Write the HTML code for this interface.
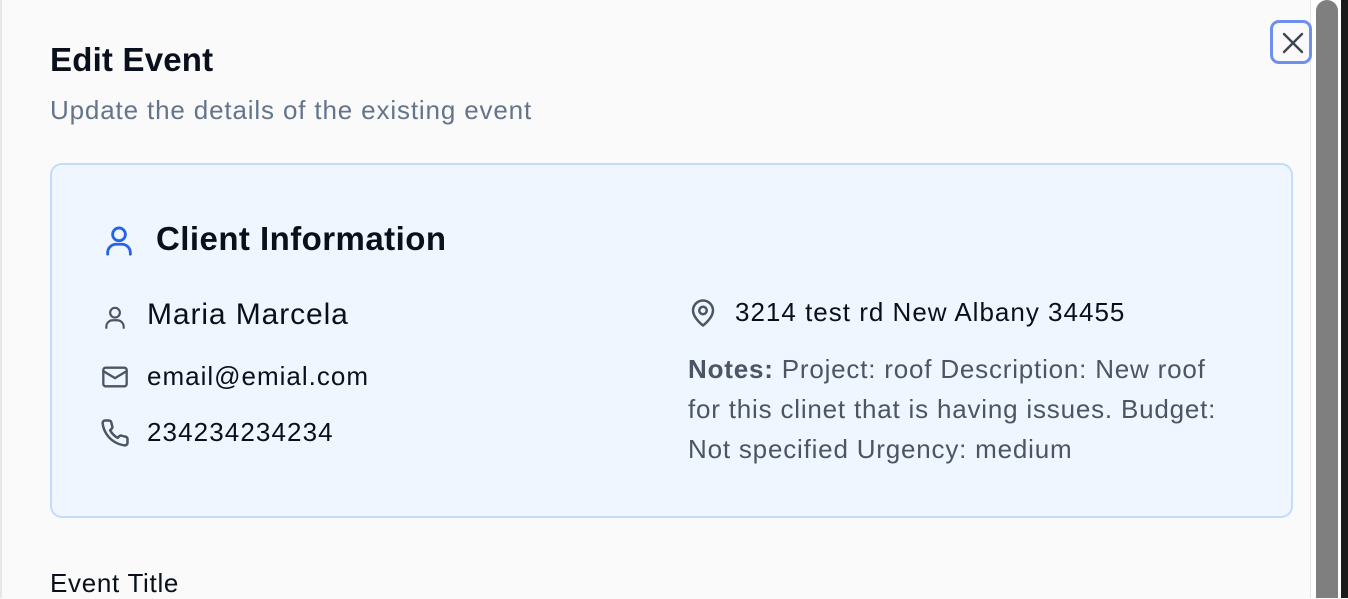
<!DOCTYPE html>
<html><head><meta charset="utf-8"><style>
*{margin:0;padding:0;box-sizing:border-box}
body{width:1348px;height:598px;overflow:hidden;background:#fafafa;font-family:"Liberation Sans",sans-serif;color:#0a0f1c;position:relative}
.a{position:absolute;white-space:nowrap}
.edge{position:absolute;left:0;top:0;width:2px;height:598px;background:#e5e7eb}
.sb{position:absolute;left:1310px;top:0;width:38px;height:598px;background:#fff;border-left:1px solid #e5e5e5}
.thumb{position:absolute;left:1316px;top:0;width:22px;height:598px;background:#7f7f7f;border-radius:11px 11px 0 0}
.dk{position:absolute;left:1341px;top:0;width:7px;height:598px;background:#1a1a1a}
.card{position:absolute;left:50px;top:163px;width:1243px;height:355px;background:#eff6ff;border:2px solid #c4dbfb;border-radius:12px}
.close{position:absolute;left:1270px;top:20px;width:42px;height:44px;border:3px solid #6d8ff0;border-radius:9px}
svg{position:absolute}
</style></head><body>
<div class="edge"></div>
<div class="a" style="left:50px;top:41px;font-size:33px;font-weight:bold;letter-spacing:0.2px">Edit Event</div>
<div class="a" style="left:50px;top:95px;font-size:26px;letter-spacing:0.85px;color:#64748b">Update the details of the existing event</div>
<div class="card"></div>
<svg style="left:102px;top:222px" width="34" height="36" viewBox="0 0 24 24" fill="none" stroke="#2563eb" stroke-width="2" stroke-linecap="round"><circle cx="12" cy="8" r="4.5"/><path d="M4 22v-1a6 6 0 0 1 6-6h4a6 6 0 0 1 6 6v1"/></svg>
<div class="a" style="left:156px;top:220px;font-size:33px;font-weight:bold;letter-spacing:0.45px">Client Information</div>
<svg style="left:102px;top:303px" width="26" height="28" viewBox="0 0 24 24" fill="none" stroke="#4b5563" stroke-width="2" stroke-linecap="round"><circle cx="12" cy="8" r="4.5"/><path d="M4 22v-1a6 6 0 0 1 6-6h4a6 6 0 0 1 6 6v1"/></svg>
<div class="a" style="left:147px;top:298px;font-size:30px;letter-spacing:0.9px">Maria Marcela</div>
<svg style="left:100px;top:363px" width="30" height="28" viewBox="0 0 24 24" fill="none" stroke="#4b5563" stroke-width="2" stroke-linecap="round" stroke-linejoin="round"><rect x="2" y="4" width="20" height="16" rx="2"/><path d="M22 7l-10 6L2 7"/></svg>
<div class="a" style="left:147px;top:361px;font-size:26px;letter-spacing:1px">email@emial.com</div>
<svg style="left:100px;top:418px" width="30" height="30" viewBox="0 0 24 24" fill="none" stroke="#4b5563" stroke-width="2" stroke-linecap="round" stroke-linejoin="round"><path d="M22 16.9v3a2 2 0 0 1-2.2 2 19.8 19.8 0 0 1-8.6-3.1 19.5 19.5 0 0 1-6-6A19.8 19.8 0 0 1 2.1 4.2 2 2 0 0 1 4.1 2h3a2 2 0 0 1 2 1.7c.1.9.4 1.9.7 2.8a2 2 0 0 1-.5 2.1L8.1 9.9a16 16 0 0 0 6 6l1.3-1.3a2 2 0 0 1 2.1-.4c.9.3 1.8.6 2.8.7a2 2 0 0 1 1.7 2z"/></svg>
<div class="a" style="left:147px;top:417px;font-size:26px;letter-spacing:1.1px">234234234234</div>
<svg style="left:688px;top:297px" width="30" height="32" viewBox="0 0 24 24" fill="none" stroke="#4b5563" stroke-width="2" stroke-linecap="round" stroke-linejoin="round"><path d="M20 10c0 6-8 12-8 12s-8-6-8-12a8 8 0 0 1 16 0z"/><circle cx="12" cy="10" r="3"/></svg>
<div class="a" style="left:735px;top:297px;font-size:26px;letter-spacing:1px">3214 test rd New Albany 34455</div>
<div class="a" style="left:688px;top:349px;font-size:26px;line-height:40px;letter-spacing:0.8px;color:#4b5563;white-space:nowrap">
<b>Notes:</b> Project: roof Description: New roof<br>for this clinet that is having issues. Budget:<br>Not specified Urgency: medium</div>
<div class="a" style="left:50px;top:568px;font-size:26px;letter-spacing:0.7px">Event Title</div>
<div class="sb"></div><div class="thumb"></div><div class="dk"></div>
<div class="close"></div>
<svg style="left:1281px;top:31px" width="24" height="24" viewBox="0 0 24 24" fill="none" stroke="#3f4652" stroke-width="2.4" stroke-linecap="round"><path d="M3 3l18 18M21 3L3 21"/></svg>
</body></html>
